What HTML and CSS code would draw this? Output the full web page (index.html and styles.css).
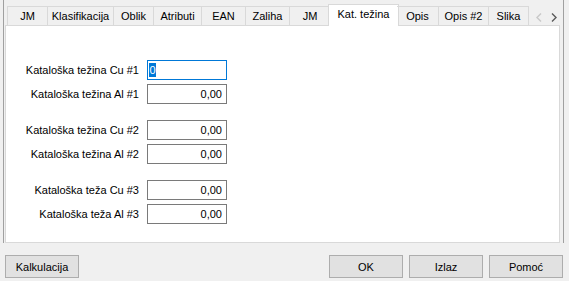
FILE: index.html
```html
<!DOCTYPE html>
<html lang="hr">
<head>
  <meta charset="UTF-8" />
  <title>Artikl - Kat. težina</title>
  <link rel="stylesheet" href="styles.css">
</head>
<body>
  <div class="frame">
    <div class="tabstrip">
      <div class="tabs">
        <div class="tab">JM</div>
        <div class="tab">Klasifikacija</div>
        <div class="tab">Oblik</div>
        <div class="tab">Atributi</div>
        <div class="tab">EAN</div>
        <div class="tab">Zaliha</div>
        <div class="tab">JM</div>
        <div class="tab selected">Kat. težina</div>
        <div class="tab">Opis</div>
        <div class="tab">Opis #2</div>
        <div class="tab last">Slika</div>
      </div>
      <div class="scroll">
        <svg width="6" height="9" viewBox="0 0 6 9"><path d="M5 0.5 L1 4.5 L5 8.5" fill="none" stroke="#c8c8c8" stroke-width="1.4"/></svg>
        <svg width="6" height="9" viewBox="0 0 6 9"><path d="M1 0.5 L5 4.5 L1 8.5" fill="none" stroke="#5a5a5a" stroke-width="1.4"/></svg>
      </div>
    </div>
    <div class="page">
      <div class="group">
        <label>Kataloška težina Cu #1</label>
        <div class="field active"><span class="sel">0</span></div>
        <label>Kataloška težina Al #1</label>
        <div class="field">0,00</div>
      </div>
      <div class="group">
        <label>Kataloška težina Cu #2</label>
        <div class="field">0,00</div>
        <label>Kataloška težina Al #2</label>
        <div class="field">0,00</div>
      </div>
      <div class="group">
        <label>Kataloška teža Cu #3</label>
        <div class="field">0,00</div>
        <label>Kataloška teža Al #3</label>
        <div class="field">0,00</div>
      </div>
    </div>
  </div>
  <div class="footer">
    <button>Kalkulacija</button>
    <div class="spacer"></div>
    <button>OK</button>
    <button>Izlaz</button>
    <button>Pomoć</button>
  </div>
</body>
</html>
```

FILE: styles.css
```css
body { margin: 0; background-color: #f0f0f0; font-family: "Liberation Sans", Arial, sans-serif; font-size: 11px; color: #000; }
.frame { margin: 0 5px 0 3px; border-left: 1px solid #a0a0a0; border-right: 1px solid #a0a0a0; padding: 4px 3px 0 1px; }
.tabstrip { display: flex; align-items: flex-start; height: 21px; padding-left: 2px; position: relative; z-index: 1; }
.tabs { display: grid; grid-template-columns: 40px 66px 40px 48px 44px 44px 41px 67px 41px 50px 41px; }
.tab { box-sizing: border-box; height: 19px; margin-top: 2px; border-top: 1px solid #d9d9d9; border-left: 1px solid #d9d9d9; text-align: center; line-height: 19px; }
.tab.last { border-right: 1px solid #d9d9d9; }
.tab.selected { height: 22px; margin: 0 -2px 0 -2px; background-color: #fff; border: 1px solid #d9d9d9; border-bottom: none; line-height: 18px; }
.tab.selected + .tab { border-left: none; }
.scroll { display: flex; gap: 9px; margin-left: 7px; margin-top: 9px; }
.page { box-sizing: border-box; height: 218px; background-color: #fff; border: 1px solid #d9d9d9; padding-top: 34px; }
.group { display: grid; grid-template-columns: 133px 80px; column-gap: 8px; row-gap: 4px; }
.group + .group { margin-top: 16px; }
.group label { text-align: right; line-height: 20px; white-space: nowrap; }
.field { box-sizing: border-box; height: 20px; border: 1px solid #7a7a7a; background-color: #fff; text-align: right; padding: 0 4px; line-height: 18px; }
.field.active { border-color: #0078d7; text-align: left; padding: 2px 1px 0; line-height: 14px; }
.sel { display: inline-block; width: 7px; height: 14px; background-color: #0078d7; color: #fff; text-align: center; vertical-align: top; }
.footer { display: flex; gap: 6px; margin-top: 12px; padding: 0 6px 0 5px; }
.spacer { flex: 1; }
button { box-sizing: border-box; width: 74px; height: 23px; border: 1px solid #adadad; background-color: #e1e1e1; font-family: inherit; font-size: 11px; color: #000; padding: 0; }
```
